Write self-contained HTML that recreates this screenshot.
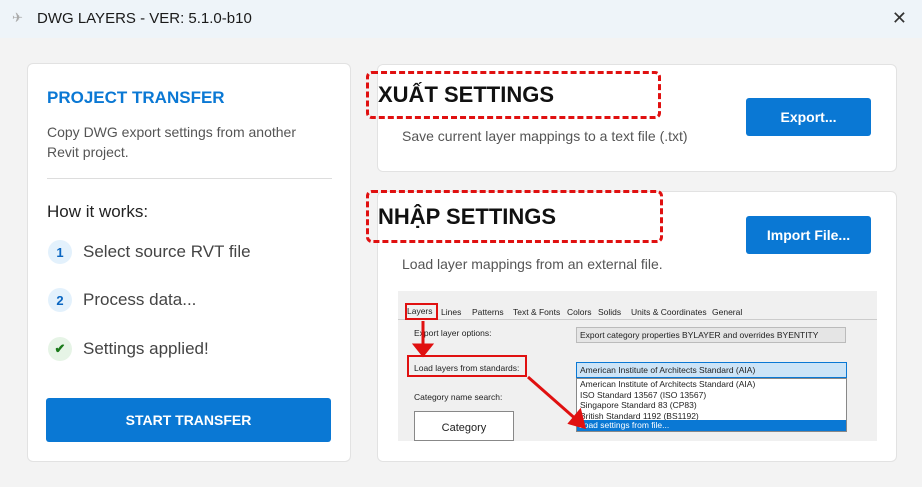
<!DOCTYPE html><html><head><style>
*{box-sizing:border-box;margin:0;padding:0}
body{width:922px;height:487px;background:#f3f3f3;font-family:"Liberation Sans",sans-serif;position:relative;overflow:hidden;color:#333}
.tb{position:absolute;left:0;top:0;width:922px;height:38px;background:#eef4f9;font-size:15px;color:#1a1a1a}
.card{position:absolute;background:#fff;border:1px solid #e2e2e2;border-radius:6px}
.btn{position:absolute;background:#0a78d4;color:#fff;font-weight:bold;font-size:14px;display:flex;align-items:center;justify-content:center;border-radius:3px}
.dash{position:absolute;border:3px dashed #e01010;border-radius:6px;font-weight:bold;font-size:22px;color:#111;padding-left:9px;display:flex;align-items:center}
.step{position:absolute;left:48px;font-size:17px;color:#444;display:flex;align-items:center}
.c{width:24px;height:24px;border-radius:12px;background:#e3f1fc;color:#0a66c2;font-size:13px;font-weight:bold;display:flex;align-items:center;justify-content:center;margin-right:11px}
.ss{position:absolute;left:398px;top:291px;width:479px;height:150px;background:#f0f0f0;font-size:8.5px;color:#222;overflow:hidden}
.ss div{position:absolute}
</style></head><body>
<div class="tb"><span style="position:absolute;left:12px;top:10px;color:#aaa;font-size:13px">✈</span><span style="position:absolute;left:37px;top:10px">DWG LAYERS - VER: 5.1.0-b10</span><span style="position:absolute;right:15px;top:8px;font-size:18px;font-weight:300;color:#333">✕</span></div>
<div class="card" style="left:27px;top:63px;width:324px;height:399px">
<div style="position:absolute;left:19px;top:24px;color:#0a78d4;font-weight:bold;font-size:17px">PROJECT TRANSFER</div>
<div style="position:absolute;left:19px;top:58px;font-size:14px;line-height:20px;color:#555;width:272px">Copy DWG export settings from another Revit project.</div>
<div style="position:absolute;left:19px;top:114px;width:285px;border-top:1px solid #ddd"></div>
<div style="position:absolute;left:19px;top:138px;font-size:17px;color:#222">How it works:</div>
</div>
<div class="step" style="top:240px"><span class="c">1</span>Select source RVT file</div>
<div class="step" style="top:288px"><span class="c">2</span>Process data...</div>
<div class="step" style="top:337px"><span class="c" style="background:#e6f4e6;color:#1a7a1a">✔</span>Settings applied!</div>
<div class="btn" style="left:46px;top:398px;width:285px;height:44px">START TRANSFER</div>
<div class="card" style="left:377px;top:64px;width:520px;height:108px"></div>
<div class="card" style="left:377px;top:191px;width:520px;height:271px"></div>
<div class="dash" style="left:366px;top:71px;width:295px;height:48px">XUẤT SETTINGS</div>
<div class="dash" style="left:366px;top:190px;width:297px;height:53px">NHẬP SETTINGS</div>
<div style="position:absolute;left:402px;top:128px;font-size:14px;color:#555">Save current layer mappings to a text file (.txt)</div>
<div style="position:absolute;left:402px;top:256px;font-size:14px;color:#555">Load layer mappings from an external file.</div>
<div class="btn" style="left:746px;top:98px;width:125px;height:38px">Export...</div>
<div class="btn" style="left:746px;top:216px;width:125px;height:38px">Import File...</div>
<div class="ss">
<div style="left:0;top:12px;width:479px;height:17px;border-bottom:1px solid #ccc"></div>
<div style="left:9px;top:15px">Layers</div><div style="left:43px;top:16px">Lines</div><div style="left:74px;top:16px">Patterns</div><div style="left:115px;top:16px">Text &amp; Fonts</div><div style="left:169px;top:16px">Colors</div><div style="left:200px;top:16px">Solids</div><div style="left:233px;top:16px">Units &amp; Coordinates</div><div style="left:314px;top:16px">General</div>
<div style="left:7px;top:12px;width:33px;height:17px;border:2px solid #e01010"></div>
<div style="left:16px;top:37px">Export layer options:</div>
<div style="left:178px;top:36px;width:270px;height:16px;background:#e5e5e5;border:1px solid #bbb;padding:2px 3px">Export category properties BYLAYER and overrides BYENTITY</div>
<div style="left:16px;top:72px">Load layers from standards:</div>
<div style="left:9px;top:64px;width:120px;height:22px;border:2px solid #e01010"></div>
<div style="left:178px;top:71px;width:271px;height:16px;background:#cce4f7;border:1px solid #0a78d4;padding:2px 3px">American Institute of Architects Standard (AIA)</div>
<div style="left:178px;top:87px;width:271px;height:54px;background:#fff;border:1px solid #888;line-height:10.5px;padding-left:3px">American Institute of Architects Standard (AIA)<br>ISO Standard 13567 (ISO 13567)<br>Singapore Standard 83 (CP83)<br>British Standard 1192 (BS1192)</div>
<div style="left:179px;top:129px;width:269px;height:11px;background:#0a78d4;color:#fff;padding-left:2px">Load settings from file...</div>
<div style="left:16px;top:101px">Category name search:</div>
<div style="left:16px;top:120px;width:100px;height:30px;background:#fff;border:1px solid #888;font-size:11px;text-align:center;padding-top:10px">Category</div>
<svg style="position:absolute;left:0;top:0" width="479" height="150"><g stroke="#e01010" stroke-width="3" fill="#e01010"><line x1="25" y1="30" x2="25" y2="56"/><polygon points="17,54 33,54 25,64"/><line x1="130" y1="86" x2="180" y2="130"/><polygon points="172,132 186,136 182,120"/></g></svg>
</div>
</body></html>
